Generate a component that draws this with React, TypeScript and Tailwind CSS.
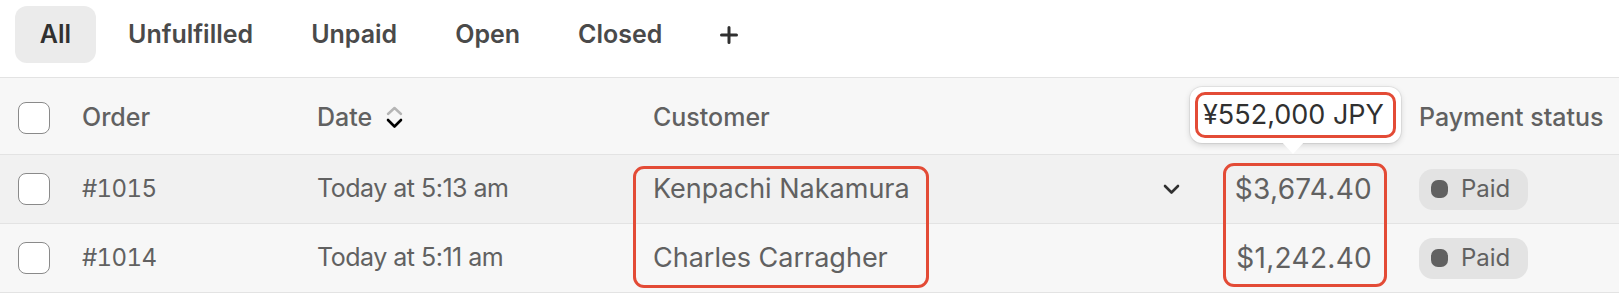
import React from "react";

const font = { fontFamily: "Inter, 'Noto Sans', sans-serif" };

function Checkbox() {
  return <div className="w-[32px] h-[32px] rounded-[8px] border-[1.5px] border-[#8a8a8a] bg-white shrink-0" />;
}

function Badge() {
  return (
    <div className="flex items-center h-[41px] w-[109px] rounded-[14px] bg-[#e3e3e3] pl-[12px] gap-[13px]">
      <div className="w-[17px] h-[18px] rounded-[7px] bg-[#616161]" />
      <span className="text-[24px] text-[#616161] leading-none">Paid</span>
    </div>
  );
}

function Row({ id, date, name, amount, bg, chevron }: { id: string; date: string; name: string; amount: string; bg: string; chevron?: boolean }) {
  return (
    <div className={`flex items-center h-[69px] border-b border-[#e3e3e3] ${bg}`}>
      <div className="pl-[18px] w-[82px] shrink-0"><Checkbox /></div>
      <div className="w-[235px] shrink-0 tabular-nums text-[24px] tracking-[-0.6px]">{id}</div>
      <div className="w-[336px] shrink-0 text-[25px] tracking-[-0.5px] whitespace-nowrap">{date}</div>
      <div className="w-[510px] shrink-0 text-[27px] whitespace-nowrap">{name}</div>
      <div className="w-[17px] shrink-0 flex items-center">
        {chevron && (
          <svg width="17" height="11" viewBox="0 0 17 11" fill="none">
            <path d="M2 2 L8.5 8.5 L15 2" stroke="#303030" strokeWidth="2.6" strokeLinecap="round" strokeLinejoin="round" />
          </svg>
        )}
      </div>
      <div className="w-[192px] shrink-0 text-right text-[28px] tracking-[0.3px] whitespace-nowrap">{amount}</div>
      <div className="pl-[47px]"><Badge /></div>
    </div>
  );
}

export default function App() {
  return (
    <div className="w-[1619px] h-[293px] bg-white relative overflow-hidden text-[24px] text-[#616161]" style={font}>
      <div className="h-[78px] flex items-start pt-[6px] pl-[15px] gap-[6px] border-b border-[#e3e3e3] text-[25px]">
        <div className="h-[57px] w-[81px] justify-center rounded-[12px] bg-[#ebebeb] flex items-center text-[#303030] font-semibold">All</div>
        <div className="h-[57px] px-[26px] flex items-center text-[#4a4a4a] font-semibold">Unfulfilled</div>
        <div className="h-[57px] px-[26px] flex items-center text-[#4a4a4a] font-semibold">Unpaid</div>
        <div className="h-[57px] px-[26px] flex items-center text-[#4a4a4a] font-semibold">Open</div>
        <div className="h-[57px] px-[26px] flex items-center text-[#4a4a4a] font-semibold">Closed</div>
        <div className="h-[57px] px-[26px] flex items-center">
          <svg width="18" height="18" viewBox="0 0 18 18">
            <path d="M9 1.5 V16.5 M1.5 9 H16.5" stroke="#303030" strokeWidth="3" strokeLinecap="round" />
          </svg>
        </div>
      </div>
      <div className="flex items-center h-[77px] pt-[3px] bg-[#f7f7f7] border-b border-[#e3e3e3] font-medium text-[25px]">
        <div className="pl-[18px] w-[82px] shrink-0"><Checkbox /></div>
        <div className="w-[235px] shrink-0">Order</div>
        <div className="w-[336px] shrink-0 flex items-center gap-[14px]">
          <span>Date</span>
          <svg width="17" height="24" viewBox="0 0 17 24" fill="none">
            <path d="M2 8 L8.5 2 L15 8" stroke="#b5b5b5" strokeWidth="2.4" strokeLinecap="round" strokeLinejoin="round" />
            <path d="M2 14 L8.5 20.5 L15 14" stroke="#000000" strokeWidth="2.6" strokeLinecap="round" strokeLinejoin="round" />
          </svg>
        </div>
        <div className="w-[719px] shrink-0">Customer</div>
        <div className="pl-[47px] whitespace-nowrap">Payment status</div>
      </div>
      <Row id="#1015" date="Today at 5:13 am" name="Kenpachi Nakamura" amount="$3,674.40" bg="bg-[#f1f1f1]" chevron />
      <Row id="#1014" date="Today at 5:11 am" name="Charles Carragher" amount="$1,242.40" bg="bg-[#f7f7f7]" />

      {/* annotation boxes */}
      <div className="absolute left-[633px] top-[166px] w-[296px] h-[122px] border-[3px] border-[#e34b36] rounded-[11px]" />
      <div className="absolute left-[1223px] top-[163px] w-[164px] h-[124px] border-[3px] border-[#e34b36] rounded-[11px]" />

      {/* tooltip */}
      <div className="absolute left-[1190px] top-[87px] w-[211px] h-[56px] bg-white rounded-[12px] shadow-[0_0_0_1px_rgba(0,0,0,0.06),0_2px_6px_rgba(0,0,0,0.15)] p-[5px]">
        <div className="w-full h-full border-[3px] border-[#e34b36] rounded-[10px] flex items-center pl-[5px] text-[#303030] text-[27px] font-normal whitespace-nowrap">¥552,000 JPY</div>
        <div className="absolute left-[90px] top-[53px] w-0 h-0 border-l-[13px] border-r-[13px] border-t-[14px] border-l-transparent border-r-transparent border-t-white" />
      </div>
    </div>
  );
}
